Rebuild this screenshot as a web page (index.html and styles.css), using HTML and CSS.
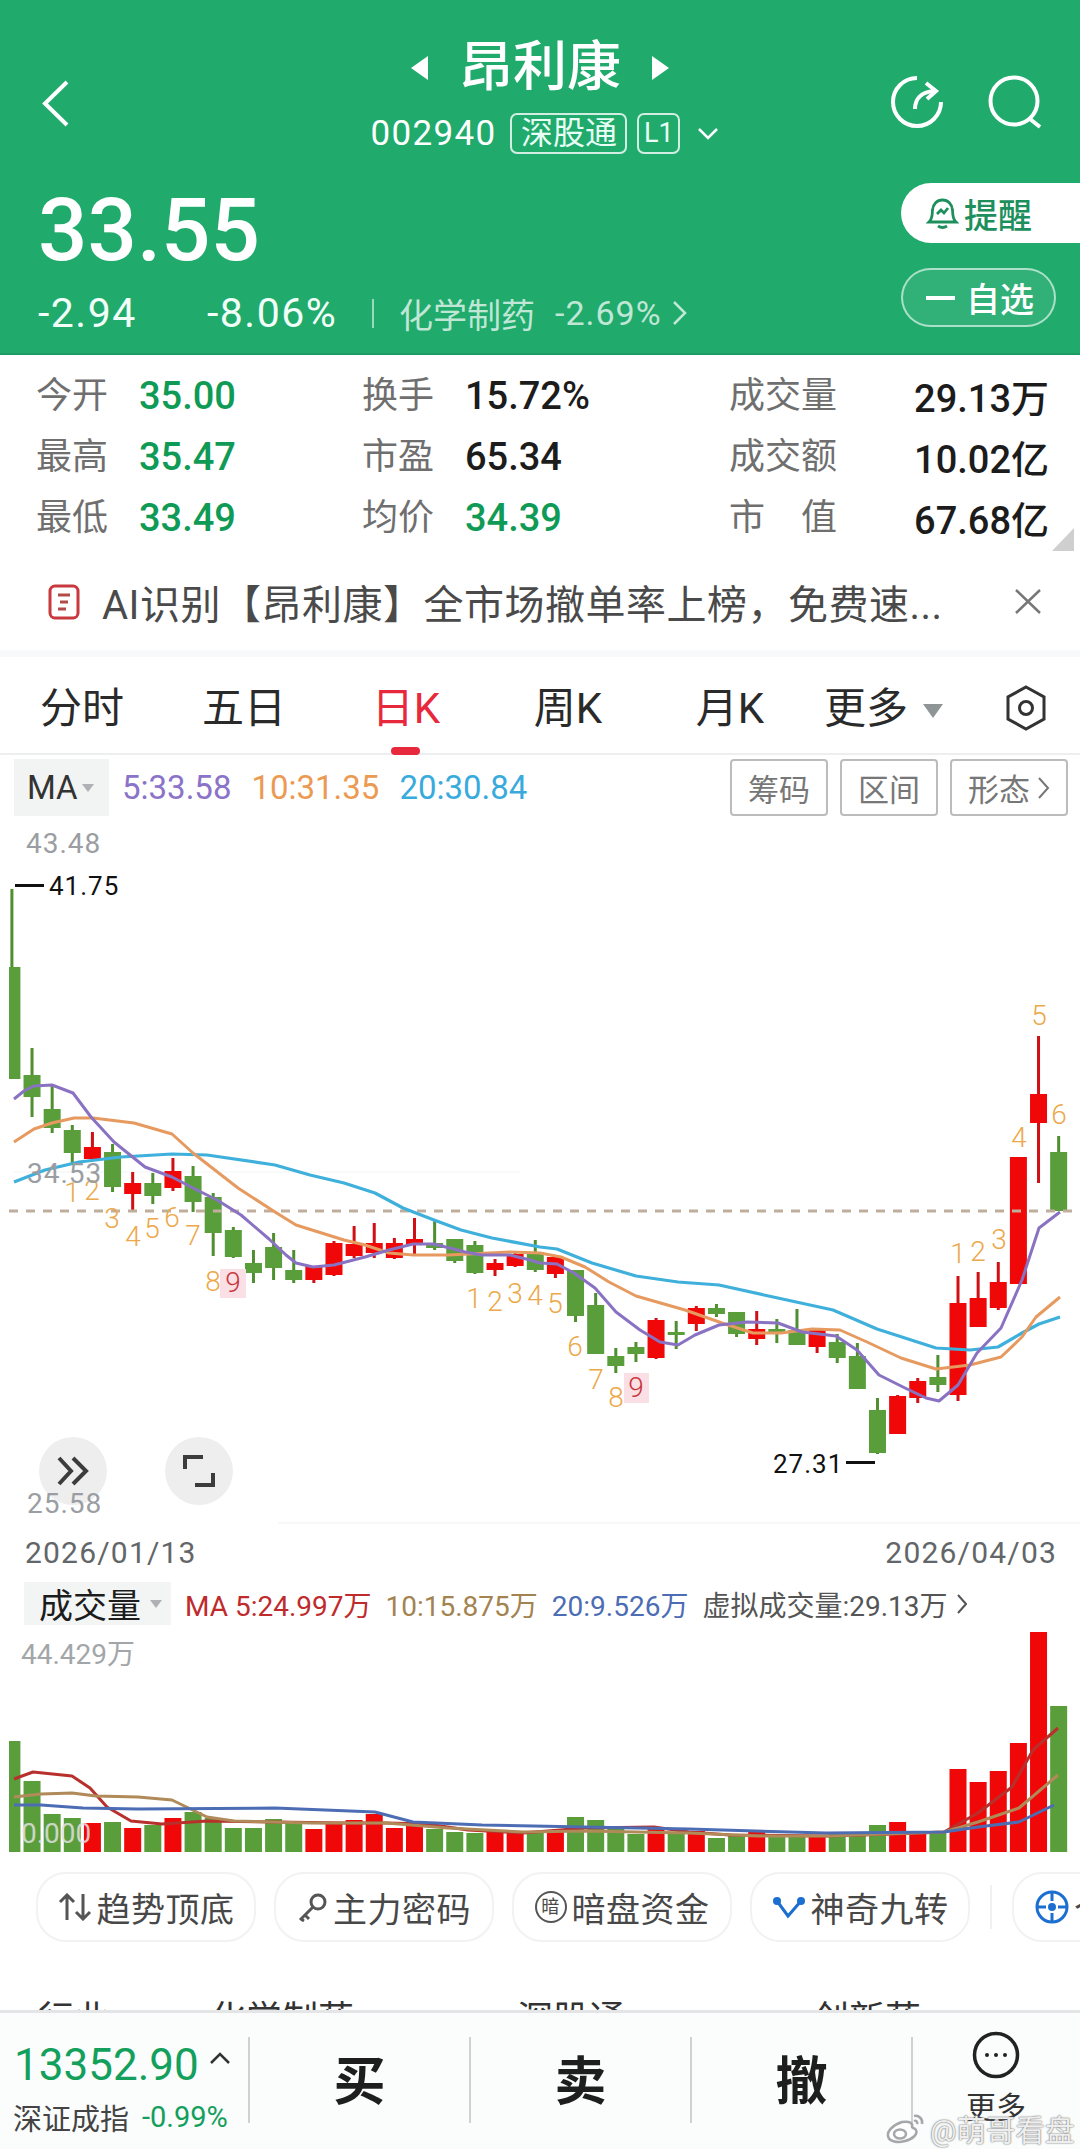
FILE: index.html
```html
<!DOCTYPE html>
<html lang="zh-CN">
<head>
  <meta charset="UTF-8" />
  <title>昂利康 002940</title>
  <link rel="stylesheet" href="styles.css">
</head>
<body>
  <div class="page">
    <header class="quote">
      <div class="head-top">
        <svg class="back" width="28" height="47" viewBox="0 0 28 47"><path d="M25 2 L3 23.5 L25 45" /></svg>
        <div class="head-center">
          <div class="name-row">
            <span class="tri tri-left"></span>
            <h1>昂利康</h1>
            <span class="tri tri-right"></span>
          </div>
          <div class="code-row">
            <span class="code">002940</span>
            <span class="badge">深股通</span>
            <span class="badge badge-l1">L1</span>
            <svg class="down" width="22" height="13" viewBox="0 0 22 13"><path d="M2 2 L11 11 L20 2" /></svg>
          </div>
        </div>
        <div class="head-icons">
          <svg width="55" height="54" viewBox="0 0 55 54"><path d="M27 3 A24 24 0 1 0 51 27" /><path d="M25 34 C25 24 31 17 44 16" /><path d="M36 8 L46 16 L37 24" /></svg>
          <svg width="55" height="54" viewBox="0 0 55 54"><circle cx="26" cy="26" r="23.5" /><path d="M42 44 L52 52" /></svg>
        </div>
      </div>
      <div class="head-price">
        <div>
          <div class="price">33.55</div>
          <div class="change-row">
            <span class="chg chg-a">-2.94</span>
            <span class="chg chg-b">-8.06%</span>
            <span class="vbar"></span>
            <span class="sector">化学制药</span>
            <span class="sector-chg">-2.69%</span>
            <svg class="sector-arrow" width="15" height="26" viewBox="0 0 15 26"><path d="M2 2 L13 13 L2 24" /></svg>
          </div>
        </div>
        <div class="head-btns">
          <div class="pill-alert">
            <svg width="33" height="33" viewBox="0 0 33 33"><path d="M3 25 C7 21 6 17 6.500 13 C7 7 11 3 16.500 3 C22 3 26 7 26.500 13 C27 17 26 21 30 25 Z" /><path d="M12 29 Q16.500 32 21 29" /><path d="M11 17 L15 13 L18 16 L22 11" /></svg>
            <span>提醒</span>
          </div>
          <div class="pill-watch"><i></i><span>自选</span></div>
        </div>
      </div>
    </header>

    <section class="stats">
      <div class="stat"><span class="lbl">今开</span><b class="down-val">35.00</b></div>
      <div class="stat"><span class="lbl">换手</span><b>15.72%</b></div>
      <div class="stat stat-right"><span class="lbl">成交量</span><b>29.13万</b></div>
      <div class="stat"><span class="lbl">最高</span><b class="down-val">35.47</b></div>
      <div class="stat"><span class="lbl">市盈</span><b>65.34</b></div>
      <div class="stat stat-right"><span class="lbl">成交额</span><b>10.02亿</b></div>
      <div class="stat"><span class="lbl">最低</span><b class="down-val">33.49</b></div>
      <div class="stat"><span class="lbl">均价</span><b class="down-val">34.39</b></div>
      <div class="stat stat-right"><span class="lbl">市　值</span><b>67.68亿</b></div>
      <span class="corner"></span>
    </section>

    <section class="ai-row">
      <svg width="32" height="36" viewBox="0 0 32 36"><rect x="2" y="2" width="28" height="32" rx="5" /><path class="ai-lines" d="M10 11 H22 M12 18 H20 M10 25 H18" /></svg>
      <span class="ai-text">AI识别【昂利康】全市场撤单率上榜，免费速...</span>
      <svg class="ai-close" width="28" height="27" viewBox="0 0 28 27"><path d="M2 2 L26 25 M26 2 L2 25" /></svg>
    </section>

    <nav class="tabs">
      <span class="tab">分时</span>
      <span class="tab">五日</span>
      <span class="tab active">日K</span>
      <span class="tab">周K</span>
      <span class="tab">月K</span>
      <span class="tab-more">更多<i></i></span>
      <svg class="tab-hex" width="42" height="46" viewBox="0 0 42 46"><path d="M21 2 L39 12 V34 L21 44 L3 34 V12 Z" /><circle cx="21" cy="23" r="6.500" /></svg>
    </nav>

    <section class="ma-row">
      <div class="ma-box">MA<i></i></div>
      <span class="ma ma5">5:33.58</span>
      <span class="ma ma10">10:31.35</span>
      <span class="ma ma20">20:30.84</span>
      <div class="ma-btns">
        <span>筹码</span>
        <span>区间</span>
        <span class="wide">形态<svg width="13" height="24" viewBox="0 0 13 24"><path d="M2 2 L11 12 L2 22" /></svg></span>
      </div>
    </section>

    <section class="kline">
      <svg id="klineChart" width="1080" height="715" viewBox="0 820 1080 715"></svg>
      <div class="round round-a"><svg width="34" height="30" viewBox="0 0 34 30"><path d="M3 2 L15 15 L3 28 M17 2 L30 15 L17 28" /></svg></div>
      <div class="round round-b"><svg width="32" height="32" viewBox="0 0 32 32"><path d="M2 14 V2 H20 M30 18 V30 H12" /></svg></div>
      <span class="axis-low">25.58</span>
    </section>

    <div class="dates"><span>2026/01/13</span><span>2026/04/03</span></div>

    <div class="vol-head">
      <div class="vol-box">成交量<i></i></div>
      <span class="v5"><em>MA</em> 5:24.997万</span>
      <span class="v10">10:15.875万</span>
      <span class="v20">20:9.526万</span>
      <span class="vv">虚拟成交量:29.13万</span>
      <svg class="vv-arrow" width="10" height="20" viewBox="0 0 10 20"><path d="M1 1 L9 10 L1 19" /></svg>
    </div>

    <section class="vol">
      <svg id="volChart" width="1080" height="233" viewBox="0 1627 1080 233"></svg>
    </section>

    <div class="chips">
      <div class="chip"><svg width="34" height="28" viewBox="0 0 34 28"><path d="M9 27 V2 M2 9 L9 2 L16 9 M25 1 V26 M18 19 L25 26 L32 19" /></svg><span>趋势顶底</span></div>
      <div class="chip"><svg width="31" height="29" viewBox="0 0 31 29"><circle cx="21" cy="9" r="7" /><path d="M16 14 L3 27 M8 22 L12 26 M4 26 L7 28" /></svg><span>主力密码</span></div>
      <div class="chip"><span class="stamp">暗</span><span>暗盘资金</span></div>
      <div class="chip"><svg class="blue" width="34" height="24" viewBox="0 0 34 24"><path d="M5 6 L16 21 L29 6" /><circle cx="5" cy="6" r="4" /><circle cx="29" cy="6" r="4" /></svg><span>神奇九转</span></div>
      <i class="chip-sep"></i>
      <div class="chip chip-cut"><svg class="cross" width="34" height="34" viewBox="0 0 34 34"><circle cx="17" cy="17" r="15" /><path d="M17 2 V11 M17 23 V32 M2 17 H11 M23 17 H32" /><circle class="dot" cx="17" cy="17" r="2.500" /></svg><span>个股</span></div>
    </div>

    <div class="tags">
      <span>行业</span>
      <span>化学制药</span>
      <span>深股通</span>
      <span>创新药</span>
    </div>

    <footer class="bottom">
      <div class="index">
        <div class="index-val">13352.90<svg width="22" height="13" viewBox="0 0 22 13"><path d="M2 11 L11 2 L20 11" /></svg></div>
        <div class="index-sub"><span>深证成指</span><b>-0.99%</b></div>
      </div>
      <div class="action">买</div>
      <div class="action">卖</div>
      <div class="action">撤</div>
      <div class="more">
        <svg width="48" height="48" viewBox="0 0 48 48"><circle cx="24" cy="24" r="21.500" /><circle class="dot" cx="15" cy="24" r="2" /><circle class="dot" cx="24" cy="24" r="2" /><circle class="dot" cx="33" cy="24" r="2" /></svg>
        <span>更多</span>
      </div>
      <div class="watermark">
        <svg width="42" height="32" viewBox="0 0 42 32"><path d="M17 10 C8 13 2 19 3 24 C4 30 13 31 20 29 C28 27 33 22 31 18 C30 16 27 16 27 15 C28 11 25 9 17 10 Z" /><ellipse cx="15" cy="22" rx="6" ry="4.500" /><path d="M29 4 C34 3 38 7 37 12 M29 9 C31 8 33 10 32 12" /></svg>
        <span>@萌哥看盘</span>
      </div>
    </footer>
  </div>
  <script src="chart.js"></script>
</body>
</html>
```

FILE: styles.css
```css
* {
  box-sizing: border-box;
}

body {
  margin: 0;
  background: #fff;
  font-family: Roboto, "Noto Sans CJK SC", sans-serif;
  color: #222;
}

i {
  display: block;
}

svg {
  display: block;
  fill: none;
}

.page {
  width: 1080px;
  height: 2149px;
  overflow: hidden;
  position: relative;
}

/* green quote header */
.quote {
  height: 355px;
  background: #20ab6d;
  color: #fff;
  border-bottom: 2px solid #1c9c63;
}

.head-top {
  height: 175px;
  display: grid;
  grid-template-columns: 1fr auto 1fr;
  padding: 0 37px;
}

.head-top svg path,
.head-top svg circle {
  stroke: #fff;
  stroke-width: 4;
}

.back {
  margin: 80px 0 0 5px;
}

.head-center {
  padding-top: 38px;
}

.name-row {
  display: flex;
  justify-content: center;
  align-items: center;
  gap: 31px;
  height: 60px;
}

h1 {
  margin: 0;
  font-size: 54px;
  line-height: 60px;
  font-weight: 500;
}

.tri {
  width: 0;
  height: 0;
  border-top: 12px solid transparent;
  border-bottom: 12px solid transparent;
}

.tri-left {
  border-right: 17px solid #fff;
}

.tri-right {
  border-left: 17px solid #fff;
}

.code-row {
  display: flex;
  align-items: center;
  margin-top: 15px;
  margin-left: 10px;
}

.code {
  font-size: 35px;
  letter-spacing: 1.300px;
  margin-right: 14px;
}

.badge {
  height: 41px;
  width: 117px;
  border: 2px solid rgba(255, 255, 255, 0.8);
  border-radius: 7px;
  font-size: 32px;
  line-height: 37px;
  text-align: center;
  color: #e9fff5;
}

.badge-l1 {
  width: 43px;
  margin-left: 10px;
  font-size: 27px;
}

.head-top .down {
  margin-left: 17px;
}

.head-top .down path {
  stroke-width: 2.500;
}

.head-icons {
  display: flex;
  justify-content: flex-end;
  gap: 43px;
  margin-top: 75px;
}

.head-icons svg path,
.head-icons svg circle {
  stroke-width: 4;
}

.head-price {
  display: flex;
  justify-content: space-between;
  padding-left: 38px;
}

.price {
  font-size: 87px;
  line-height: 90px;
  font-weight: 500;
  margin-top: 10px;
}

.change-row {
  display: flex;
  align-items: center;
  height: 40px;
  margin-top: 18px;
}

.chg {
  font-size: 41px;
  letter-spacing: 1.500px;
  color: #f2fff9;
}

.chg-a {
  width: 169px;
}

.chg-b {
  width: 165px;
}

.vbar {
  width: 2px;
  height: 29px;
  background: rgba(255, 255, 255, 0.55);
  margin-right: 25px;
}

.sector,
.sector-chg {
  font-size: 34px;
  color: rgba(255, 255, 255, 0.72);
}

.sector-chg {
  margin-left: 20px;
  letter-spacing: 1px;
}

.sector-arrow {
  margin-left: 10px;
}

.sector-arrow path {
  stroke: rgba(255, 255, 255, 0.72);
  stroke-width: 2.500;
}

.head-btns {
  width: 179px;
  padding-top: 8px;
}

.pill-alert {
  height: 60px;
  background: #fff;
  border-radius: 30px 0 0 30px;
  display: flex;
  align-items: center;
  padding-left: 25px;
  gap: 5px;
  color: #1d8f5d;
  font-size: 34px;
  font-weight: 500;
}

.pill-alert path {
  stroke: #1d8f5d;
  stroke-width: 2.800;
}

.pill-watch {
  width: 155px;
  height: 59px;
  margin-top: 25px;
  border: 2px solid rgba(255, 255, 255, 0.6);
  border-radius: 30px;
  background: rgba(255, 255, 255, 0.08);
  display: flex;
  align-items: center;
  padding-left: 23px;
  gap: 11px;
  font-size: 34px;
  font-weight: 500;
}

.pill-watch i {
  width: 29px;
  height: 4px;
  background: #fff;
}

/* stats grid */
.stats {
  display: grid;
  grid-template-columns: 326px 367px 320px;
  grid-auto-rows: 61px;
  height: 205px;
  padding: 6px 0 0 36px;
  position: relative;
}

.stat {
  display: flex;
  align-items: center;
  gap: 31px;
}

.stat-right {
  justify-content: space-between;
}

.lbl {
  font-size: 36px;
  color: #6f6f6f;
}

.stat b {
  font-size: 38px;
  font-weight: 500;
  color: #1c1c1c;
  margin-top: 8px;
}

.stat b.down-val {
  color: #0f9a55;
}

.corner {
  position: absolute;
  right: 6px;
  bottom: 9px;
  width: 22px;
  height: 23px;
  background: #cfcfcf;
  clip-path: polygon(100% 0, 100% 100%, 0 100%);
}

/* ai banner */
.ai-row {
  height: 97px;
  display: flex;
  align-items: center;
  padding: 0 0 7px 48px;
  border-bottom: 7px solid #f7f9fb;
  color: #4a4a4a;
}

.ai-row rect {
  stroke: #c8393d;
  stroke-width: 3;
}

.ai-lines {
  stroke: #b24a4a;
  stroke-width: 3;
}

.ai-text {
  font-size: 40px;
  letter-spacing: 0.500px;
  margin-left: 22px;
  width: 912px;
  white-space: nowrap;
}

.ai-close path {
  stroke: #777;
  stroke-width: 2.500;
}

/* period tabs */
.tabs {
  height: 98px;
  display: grid;
  grid-template-columns: repeat(5, 162px) 194px auto;
  align-items: start;
  padding: 31px 0 0 1px;
  border-bottom: 2px solid #eceeef;
}

.tab,
.tab-more {
  font-size: 42px;
  line-height: 42px;
  text-align: center;
  color: #2a2a2a;
  position: relative;
}

.tab.active {
  color: #e8283c;
}

.tab.active::after {
  content: "";
  position: absolute;
  left: 66px;
  top: 59px;
  width: 29px;
  height: 8px;
  border-radius: 4px;
  background: #e8283c;
}

.tab-more {
  display: flex;
  align-items: center;
  height: 42px;
  padding-left: 13px;
  gap: 15px;
}

.tab-more i {
  border-left: 10px solid transparent;
  border-right: 10px solid transparent;
  border-top: 14px solid #8f9497;
  margin-top: 4px;
}

.tab-hex {
  margin-top: -3px;
}

.tab-hex path,
.tab-hex circle {
  stroke: #333;
  stroke-width: 3;
}

/* ma legend */
.ma-row {
  height: 65px;
  display: flex;
  align-items: center;
  padding: 0 12px 0 14px;
}

.ma-box {
  width: 95px;
  height: 57px;
  background: #f2f4f4;
  display: flex;
  align-items: center;
  padding-left: 13px;
  gap: 4px;
  font-size: 33px;
  color: #333;
  margin-right: 13px;
}

.ma-box i,
.vol-box i {
  border-left: 6px solid transparent;
  border-right: 6px solid transparent;
  border-top: 8px solid #aeb2b5;
}

.ma {
  font-size: 33px;
  margin-right: 20px;
}

.ma5 {
  color: #8a73c9;
}

.ma10 {
  color: #ec9a52;
}

.ma20 {
  color: #38abdc;
}

.ma-btns {
  display: flex;
  gap: 12px;
  margin-left: auto;
}

.ma-btns span {
  width: 98px;
  height: 57px;
  border: 2px solid #bcbcbc;
  border-radius: 4px;
  display: flex;
  align-items: center;
  justify-content: center;
  gap: 7px;
  font-size: 31px;
  color: #777;
}

.ma-btns .wide {
  width: 118px;
}

.ma-btns path {
  stroke: #777;
  stroke-width: 2;
}

/* kline chart */
.kline {
  height: 715px;
  position: relative;
}

.round {
  position: absolute;
  top: 617px;
  width: 68px;
  height: 68px;
  border-radius: 50%;
  background: #eeeeee;
  display: flex;
  align-items: center;
  justify-content: center;
}

.round-a {
  left: 39px;
}

.round-b {
  left: 165px;
}

.round path {
  stroke: #3c3c3c;
  stroke-width: 4;
}

.axis-low {
  position: absolute;
  left: 27px;
  top: 668px;
  font-size: 28px;
  line-height: 32px;
  letter-spacing: 1px;
  color: #9a9ea2;
}

.axis-label {
  font-size: 28px;
  fill: #9a9ea2;
  letter-spacing: 1px;
}

.price-mark {
  font-size: 26px;
  fill: #111;
  letter-spacing: 1px;
}

.td-num {
  font-size: 28px;
  font-weight: 300;
  fill: #eca84a;
  text-anchor: middle;
}

.td-num.nine {
  fill: #c8363c;
}

.dates {
  height: 35px;
  display: flex;
  justify-content: space-between;
  align-items: center;
  padding: 0 23px 0 25px;
  font-size: 30px;
  letter-spacing: 1.200px;
  color: #626668;
}

/* volume */
.vol-head {
  height: 47px;
  margin-top: 10px;
  padding-left: 24px;
  display: flex;
  align-items: center;
  font-size: 28px;
}

.vol-box {
  width: 147px;
  height: 43px;
  background: #f3f5f5;
  display: flex;
  align-items: center;
  padding-left: 15px;
  gap: 9px;
  font-size: 34px;
  color: #1c1c1c;
  margin-right: 14px;
}

.vol-head em {
  font-style: normal;
}

.v5 {
  color: #bf2a2c;
  margin-right: 14px;
}

.v10 {
  color: #a38350;
  margin-right: 14px;
}

.v20 {
  color: #4c6db4;
  margin-right: 14px;
}

.vv {
  color: #555;
}

.vv-arrow {
  margin-left: 9px;
}

.vv-arrow path {
  stroke: #555;
  stroke-width: 2;
}

.vol {
  height: 233px;
}

.vol-max {
  font-size: 28px;
  fill: #a3a6a9;
}

.vol-zero {
  font-size: 28px;
  fill: rgba(225, 225, 225, 0.85);
}

/* feature chips */
.chips {
  display: flex;
  align-items: center;
  gap: 18px;
  padding-left: 36px;
  margin-top: 12px;
  height: 70px;
}

.chip {
  flex: none;
  width: 220px;
  height: 70px;
  border: 2px solid #f1f2f3;
  border-radius: 30px;
  display: flex;
  align-items: center;
  justify-content: center;
  gap: 5px;
  font-size: 34px;
  letter-spacing: 0.500px;
  color: #484848;
}

.chip svg path,
.chip svg circle {
  stroke: #555;
  stroke-width: 3;
}

.chip svg.blue path,
.chip svg.cross path,
.chip svg.cross circle {
  stroke: #1b6fd0;
}

.chip svg.blue circle,
.chip svg .dot {
  stroke: none;
  fill: #1b6fd0;
}

.stamp {
  width: 32px;
  height: 32px;
  border: 2px solid #555;
  border-radius: 50%;
  font-size: 18px;
  line-height: 28px;
  text-align: center;
}

.chip-sep {
  flex: none;
  width: 2px;
  height: 44px;
  background: #f0f1f2;
  margin: 0 2px;
}

.chip-cut {
  justify-content: flex-start;
  padding-left: 21px;
}

/* tag row, cut off by the bottom bar */
.tags {
  height: 68px;
  overflow: hidden;
  display: grid;
  grid-template-columns: 172px 307px 296px auto;
  padding: 58px 0 0 38px;
  font-size: 36px;
  line-height: 40px;
  color: #333;
}

/* bottom bar */
.bottom {
  height: 139px;
  display: flex;
  border-top: 3px solid #e3e5e7;
  background: #fbfcfc;
  position: relative;
}

.index {
  width: 248px;
  padding: 30px 0 0 14px;
}

.index-val {
  display: flex;
  align-items: center;
  font-size: 44px;
  line-height: 44px;
  color: #12a05c;
}

.index-val svg {
  margin: -14px 0 0 10px;
}

.index-val path {
  stroke: #333;
  stroke-width: 2.500;
}

.index-sub {
  display: flex;
  align-items: center;
  gap: 13px;
  margin: 9px 0 0 -1px;
  font-size: 29px;
  color: #444;
}

.index-sub b {
  font-weight: 400;
  color: #12a05c;
}

.action {
  width: 221px;
  height: 86px;
  margin-top: 24px;
  padding-bottom: 6px;
  border-left: 2px solid #cfd2d4;
  display: flex;
  align-items: center;
  justify-content: center;
  font-size: 52px;
  font-weight: 700;
  color: #1e1e1e;
}

.more {
  flex: 1;
  height: 86px;
  margin-top: 24px;
  border-left: 2px solid #cfd2d4;
  position: relative;
}

.more svg {
  margin: -6px 0 0 59px;
}

.more circle {
  stroke: #222;
  stroke-width: 3.500;
}

.more .dot {
  stroke: none;
  fill: #222;
}

.more span {
  display: block;
  margin: 12px 0 0 53px;
  font-size: 30px;
  line-height: 34px;
  color: #333;
}

.watermark {
  position: absolute;
  left: 885px;
  top: 94px;
  display: flex;
  align-items: center;
  gap: 3px;
  font-size: 29.500px;
  color: rgba(255, 255, 255, 0.88);
  text-shadow: 0 0 2px #777, 0 0 1px #777;
  white-space: nowrap;
}

.watermark path,
.watermark ellipse {
  stroke: #a5a8aa;
  stroke-width: 2.500;
  fill: rgba(255, 255, 255, 0.7);
}

.watermark svg path:last-child {
  fill: none;
}
```

FILE: chart.js
```js
// x, body top, body bottom, wick top, wick bottom, colour
const candles = [
  [967, 1079, 889, 1079, 'g'], [1075, 1097, 1048, 1117, 'g'], [1109, 1128, 1085, 1133, 'g'],
  [1130, 1153, 1125, 1165, 'g'], [1147, 1159, 1132, 1159, 'r'], [1152, 1187, 1144, 1192, 'g'],
  [1183, 1194, 1172, 1212, 'r'], [1183, 1196, 1173, 1204, 'g'], [1171, 1188, 1158, 1191, 'r'],
  [1176, 1202, 1166, 1212, 'g'], [1197, 1233, 1193, 1256, 'g'], [1230, 1257, 1227, 1258, 'g'],
  [1263, 1273, 1250, 1283, 'g'], [1247, 1268, 1233, 1280, 'g'], [1270, 1280, 1250, 1283, 'g'],
  [1266, 1280, 1266, 1283, 'r'], [1243, 1275, 1241, 1276, 'r'], [1244, 1256, 1226, 1258, 'r'],
  [1243, 1253, 1223, 1258, 'r'], [1243, 1258, 1238, 1259, 'r'], [1239, 1244, 1218, 1254, 'r'],
  [1243, 1248, 1221, 1250, 'g'], [1239, 1261, 1239, 1263, 'g'], [1245, 1273, 1241, 1274, 'g'],
  [1263, 1270, 1259, 1276, 'r'], [1254, 1266, 1251, 1267, 'r'], [1252, 1270, 1240, 1272, 'g'],
  [1257, 1274, 1257, 1278, 'r'], [1270, 1316, 1270, 1322, 'g'], [1305, 1354, 1293, 1354, 'g'],
  [1356, 1366, 1348, 1373, 'g'], [1347, 1354, 1342, 1362, 'g'], [1320, 1358, 1318, 1359, 'r'],
  [1332, 1335, 1321, 1349, 'g'], [1308, 1324, 1306, 1331, 'r'], [1308, 1314, 1304, 1317, 'g'],
  [1312, 1334, 1312, 1337, 'g'], [1329, 1339, 1311, 1345, 'r'], [1329, 1333, 1319, 1343, 'g'],
  [1330, 1345, 1309, 1345, 'g'], [1329, 1347, 1328, 1353, 'r'], [1342, 1358, 1334, 1363, 'g'],
  [1356, 1389, 1343, 1389, 'g'], [1410, 1453, 1398, 1454, 'g'], [1396, 1434, 1395, 1434, 'r'],
  [1381, 1398, 1378, 1403, 'r'], [1377, 1385, 1355, 1392, 'g'], [1303, 1395, 1276, 1401, 'r'],
  [1298, 1327, 1272, 1327, 'r'], [1282, 1308, 1262, 1310, 'r'], [1157, 1284, 1157, 1284, 'r'],
  [1094, 1123, 1036, 1183, 'r'], [1152, 1211, 1136, 1211, 'g']
];

const purple = [[14,1099],[24,1091],[34,1086],[52,1085],[73,1093],[91,1117],[114,1142],[145,1167],[172,1177],[193,1188],[217,1200],[241,1215],[269,1239],[286,1255],[296,1263],[313,1267],[334,1265],[365,1257],[389,1250],[413,1244],[434,1244],[465,1252],[482,1255],[510,1255],[530,1260],[540,1263],[557,1264],[574,1273],[595,1288],[616,1312],[640,1330],[660,1342],[678,1345],[695,1335],[719,1325],[747,1322],[778,1323],[802,1332],[836,1336],[857,1350],[879,1375],[905,1388],[926,1398],[939,1401],[958,1385],[977,1353],[1001,1328],[1022,1280],[1039,1228],[1060,1212]];
const orange = [[14,1142],[34,1129],[52,1123],[74,1118],[93,1118],[134,1123],[172,1134],[193,1153],[238,1188],[275,1212],[296,1225],[344,1240],[365,1245],[389,1253],[413,1255],[448,1255],[510,1252],[540,1253],[561,1257],[585,1267],[609,1282],[636,1296],[685,1310],[722,1323],[753,1333],[781,1333],[812,1329],[840,1330],[867,1342],[901,1358],[936,1369],[970,1365],[1001,1357],[1022,1337],[1036,1317],[1060,1297]];
const blue = [[14,1182],[45,1170],[79,1162],[121,1157],[172,1154],[207,1155],[275,1165],[310,1175],[344,1183],[375,1193],[403,1208],[434,1220],[461,1230],[492,1238],[540,1247],[557,1249],[592,1263],[636,1276],[678,1282],[719,1285],[764,1295],[833,1310],[877,1329],[936,1348],[970,1350],[998,1347],[1022,1333],[1039,1324],[1060,1317]];

// sequence numbers over the candles: x, y, text
const tdNums = [
  [72,1192,1],[92,1190,2],[112,1218,3],[133,1236,4],[152,1228,5],[172,1217,6],[193,1235,7],[213,1281,8],[233,1282,9],
  [474,1298,1],[495,1301,2],[515,1293,3],[535,1295,4],[555,1303,5],[575,1346,6],[596,1379,7],[616,1397,8],[636,1387,9],
  [958,1253,1],[978,1251,2],[999,1239,3],[1019,1137,4],[1039,1015,5],[1059,1114,6]
];

// volume bar tops, same order as candles
const volTops = [1741,1781,1814,1818,1823,1822,1828,1825,1818,1812,1818,1828,1828,1819,1823,1829,1824,1820,1814,1828,1825,1829,1832,1833,1830,1832,1832,1831,1817,1820,1828,1834,1829,1833,1831,1838,1835,1832,1835,1836,1835,1833,1832,1825,1822,1832,1831,1769,1782,1771,1743,1632,1706];
const volColors = candles.map(c => c[4]);

const vol5 = [[14,1779],[33,1772],[72,1776],[90,1788],[107,1807],[131,1821],[162,1824],[207,1821],[275,1822],[344,1823],[386,1823],[427,1824],[468,1830],[523,1833],[585,1828],[654,1827],[689,1832],[730,1835],[826,1836],[895,1834],[944,1832],[978,1813],[1012,1787],[1033,1750],[1058,1728]];
const vol10 = [[14,1797],[41,1794],[72,1793],[96,1796],[138,1797],[172,1800],[207,1817],[234,1821],[310,1823],[386,1823],[448,1828],[523,1832],[585,1831],[689,1833],[758,1836],[826,1836],[944,1832],[978,1822],[1019,1808],[1058,1775]];
const vol20 = [[14,1805],[41,1805],[83,1808],[138,1809],[275,1808],[375,1812],[413,1822],[482,1825],[585,1827],[689,1829],[826,1833],[944,1832],[978,1827],[1019,1822],[1054,1805]];

const candleX = i => 11.9 + 20.13 * i;
const line = (pts, color, width) =>
  `<polyline points="${pts.map(p => p.join(',')).join(' ')}" fill="none" stroke="${color}" stroke-width="${width}" stroke-linejoin="round" />`;
const GREEN = '#5a9e3c', RED = '#f00808';

let kline = '<line x1="14" x2="520" y1="1172" y2="1172" stroke="#f8f9f9" stroke-width="2" />';
kline += '<line x1="278" x2="1080" y1="1523" y2="1523" stroke="#f8f8f8" stroke-width="2" />';

candles.forEach((c, i) => {
  const x = candleX(i);
  const left = Math.max(9, x - 8.5);
  const right = x + 8.5;
  const col = c[4] === 'g' ? GREEN : RED;
  const wick = c[4] === 'g' ? '#4f8f30' : '#cf1015';
  kline += `<rect x="${x - 1.5}" y="${c[2]}" width="3" height="${c[3] - c[2]}" fill="${wick}" />`;
  kline += `<rect x="${left}" y="${c[0]}" width="${right - left}" height="${c[1] - c[0]}" fill="${col}" />`;
});

kline += '<line x1="9" x2="1072" y1="1211" y2="1211" stroke="#bfae9e" stroke-width="3" stroke-dasharray="9 8" />';
kline += line(blue, '#3fb0dc', 3.2) + line(orange, '#e69a5f', 3) + line(purple, '#8a72c2', 3);

kline += '<rect x="220" y="1269" width="26" height="29" fill="#fae0e4" /><rect x="624" y="1373" width="25" height="30" fill="#fae0e4" />';
tdNums.forEach(n => {
  kline += `<text class="td-num${n[2] === 9 ? ' nine' : ''}" x="${n[0]}" y="${n[1] + 10}">${n[2]}</text>`;
});

kline += '<text class="axis-label" x="26" y="853">43.48</text>';
kline += '<text class="axis-label" x="27" y="1183">34.53</text>';
kline += '<rect x="15" y="884" width="29" height="3" fill="#111" /><text class="price-mark" x="49" y="895">41.75</text>';
kline += '<text class="price-mark" x="773" y="1473">27.31</text><rect x="846" y="1461" width="29" height="3" fill="#111" />';
document.getElementById('klineChart').innerHTML = kline;

let vol = '';
volTops.forEach((top, i) => {
  const x = candleX(i);
  const left = Math.max(9, x - 8.5);
  const col = volColors[i] === 'g' ? GREEN : RED;
  vol += `<rect x="${left}" y="${top}" width="${x + 8.5 - left}" height="${1852 - top}" fill="${col}" />`;
});
vol += line(vol5, '#b8302c', 3) + line(vol10, '#b08a58', 3) + line(vol20, '#4c6db4', 3);
vol += '<text class="vol-max" x="21" y="1664">44.429万</text><text class="vol-zero" x="21" y="1843">0.000</text>';
document.getElementById('volChart').innerHTML = vol;
```
